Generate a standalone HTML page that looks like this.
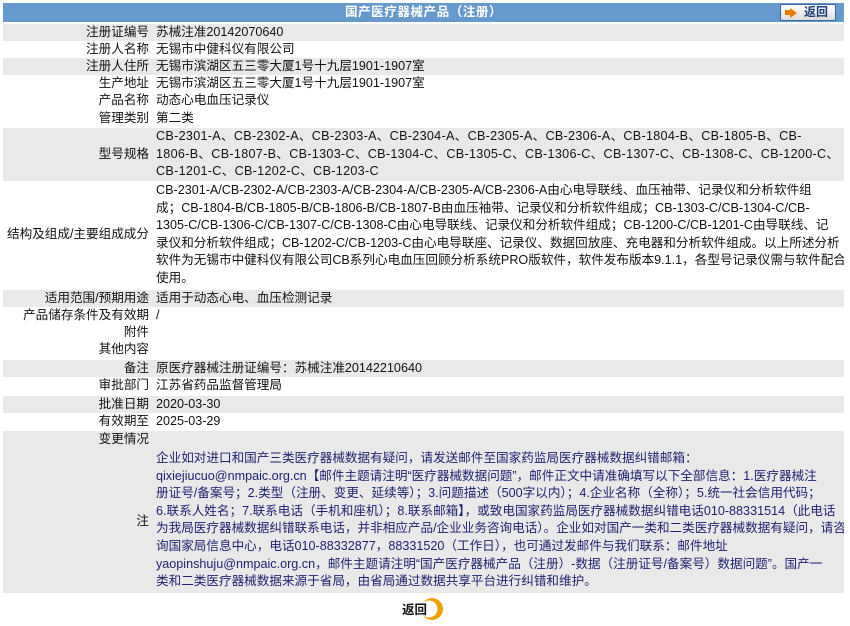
<!DOCTYPE html>
<html><head><meta charset="utf-8"><style>
*{margin:0;padding:0;box-sizing:border-box}
body{width:850px;height:626px;background:#fff;font-family:"Liberation Sans","Noto Sans CJK SC",sans-serif;font-size:12.6px;color:#111;position:relative;overflow:hidden}
.hd{position:absolute;left:3px;top:3px;width:841px;height:19px;background:#6699cc;color:#fff;font-weight:bold;text-align:center;line-height:19px;font-size:12.6px;letter-spacing:0.5px}
.btn{position:absolute;right:8px;top:1px;width:56px;height:17px;background:linear-gradient(#fff,#dcdcdc);border:1px solid #3a6aa0;border-radius:2px;color:#1a3e7a;font-weight:bold;line-height:15px;font-size:12px;text-align:right;padding-right:7px}
.btn:before{content:"";position:absolute;left:9px;top:3px;width:0;height:0;border-left:7px solid #ee7a00;border-top:5px solid transparent;border-bottom:5px solid transparent}
.btn:after{content:"";position:absolute;left:4px;top:5px;width:5px;height:5px;background:#ee7a00}
.r{position:absolute;left:3px;width:841px;line-height:17.6px;white-space:nowrap}
.g{background:#e9e9e9}
.l{position:absolute;left:0;width:146px;text-align:right}
.v{position:absolute;left:153px;width:688px;overflow:hidden}
.n{color:#1d1f6e}
.back{position:absolute;left:402px;top:597px;width:44px;height:24px}
</style></head><body>
<div class="hd">国产医疗器械产品（注册）<div class="btn" style="letter-spacing:0">返回</div></div>
<div class="r g" style="top:24px;height:17px"><div class="l">注册证编号</div><div class="v">苏械注准20142070640</div></div>
<div class="r" style="top:41px;height:17px"><div class="l">注册人名称</div><div class="v">无锡市中健科仪有限公司</div></div>
<div class="r g" style="top:58px;height:17px"><div class="l">注册人住所</div><div class="v">无锡市滨湖区五三零大厦1号十九层1901-1907室</div></div>
<div class="r" style="top:75px;height:17px"><div class="l">生产地址</div><div class="v">无锡市滨湖区五三零大厦1号十九层1901-1907室</div></div>
<div class="r" style="top:92px;height:18px"><div class="l">产品名称</div><div class="v">动态心电血压记录仪</div></div>
<div class="r" style="top:110px;height:17px"><div class="l">管理类别</div><div class="v">第二类</div></div>
<div class="r g" style="top:128px;height:53px"><div class="l" style="top:17.6px">型号规格</div><div class="v" style="letter-spacing:0.3px">CB-2301-A、CB-2302-A、CB-2303-A、CB-2304-A、CB-2305-A、CB-2306-A、CB-1804-B、CB-1805-B、CB-<br>1806-B、CB-1807-B、CB-1303-C、CB-1304-C、CB-1305-C、CB-1306-C、CB-1307-C、CB-1308-C、CB-1200-C、<br>CB-1201-C、CB-1202-C、CB-1203-C</div></div>
<div class="r" style="top:182px;height:108px"><div class="l" style="top:44px;left:-3px;width:149px">结构及组成/主要组成成分</div><div class="v">CB-2301-A/CB-2302-A/CB-2303-A/CB-2304-A/CB-2305-A/CB-2306-A由心电导联线、血压袖带、记录仪和分析软件组<br>成；CB-1804-B/CB-1805-B/CB-1806-B/CB-1807-B由血压袖带、记录仪和分析软件组成；CB-1303-C/CB-1304-C/CB-<br>1305-C/CB-1306-C/CB-1307-C/CB-1308-C由心电导联线、记录仪和分析软件组成；CB-1200-C/CB-1201-C由导联线、记<br>录仪和分析软件组成；CB-1202-C/CB-1203-C由心电导联座、记录仪、数据回放座、充电器和分析软件组成。以上所述分析<br>软件为无锡市中健科仪有限公司CB系列心电血压回顾分析系统PRO版软件，软件发布版本9.1.1，各型号记录仪需与软件配合<br>使用。</div></div>
<div class="r g" style="top:290px;height:17px"><div class="l">适用范围/预期用途</div><div class="v">适用于动态心电、血压检测记录</div></div>
<div class="r" style="top:307px;height:17px"><div class="l">产品储存条件及有效期</div><div class="v">/</div></div>
<div class="r" style="top:324px;height:17px"><div class="l">附件</div></div>
<div class="r" style="top:341px;height:18px"><div class="l">其他内容</div></div>
<div class="r g" style="top:360px;height:17px"><div class="l">备注</div><div class="v">原医疗器械注册证编号：苏械注准20142210640</div></div>
<div class="r" style="top:377px;height:18px"><div class="l">审批部门</div><div class="v">江苏省药品监督管理局</div></div>
<div class="r g" style="top:396px;height:17px"><div class="l">批准日期</div><div class="v">2020-03-30</div></div>
<div class="r" style="top:413px;height:17px"><div class="l">有效期至</div><div class="v">2025-03-29</div></div>
<div class="r g" style="top:431px;height:162px"><div class="l">变更情况</div><div class="l" style="top:82px">注</div><div class="v n" style="top:19px">企业如对进口和国产三类医疗器械数据有疑问，请发送邮件至国家药监局医疗器械数据纠错邮箱：<br>qixiejiucuo@nmpaic.org.cn【邮件主题请注明“医疗器械数据问题”，邮件正文中请准确填写以下全部信息：1.医疗器械注<br>册证号/备案号；2.类型（注册、变更、延续等）；3.问题描述（500字以内）；4.企业名称（全称）；5.统一社会信用代码；<br>6.联系人姓名；7.联系电话（手机和座机）；8.联系邮箱】，或致电国家药监局医疗器械数据纠错电话010-88331514（此电话<br>为我局医疗器械数据纠错联系电话，并非相应产品/企业业务咨询电话）。企业如对国产一类和二类医疗器械数据有疑问，请咨<br>询国家局信息中心，电话010-88332877，88331520（工作日），也可通过发邮件与我们联系：邮件地址<br>yaopinshuju@nmpaic.org.cn，邮件主题请注明“国产医疗器械产品（注册）-数据（注册证号/备案号）数据问题”。国产一<br>类和二类医疗器械数据来源于省局，由省局通过数据共享平台进行纠错和维护。</div></div>
<svg class="back" viewBox="0 0 44 24"><circle cx="30" cy="12" r="11" fill="#f0a000"/><circle cx="27" cy="12" r="8.5" fill="#fff"/><text x="0" y="17" font-family="Liberation Sans,Noto Sans CJK SC,sans-serif" font-size="12.5" font-weight="bold" fill="#111">返回</text></svg>
</body></html>
